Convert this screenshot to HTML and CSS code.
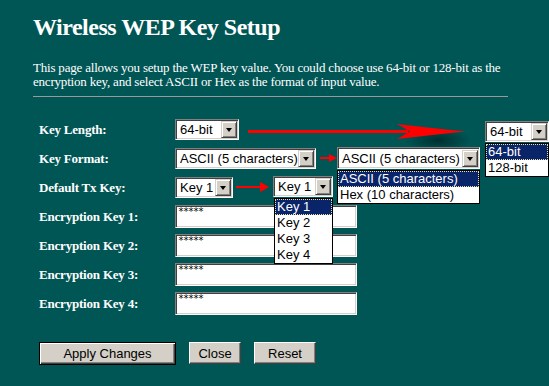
FILE: index.html
```html
<!DOCTYPE html>
<html>
<head>
    <title>Wireless WEP Key Setup</title>
    <link rel="stylesheet" href="styles.css">
</head>
<body>
<div class="page">
    <h1 class="title">Wireless WEP Key Setup</h1>
    <p class="intro">This page allows you setup the WEP key value. You could choose use 64-bit or 128-bit as the encryption key, and select ASCII or Hex as the format of input value.</p>
    <hr class="rule">

    <div class="form">
        <div class="row">
            <div class="label">Key Length:</div>
            <div class="select len"><span class="value">64-bit</span><span class="drop"></span></div>
        </div>
        <div class="row">
            <div class="label">Key Format:</div>
            <div class="select fmt"><span class="value">ASCII (5 characters)</span><span class="drop"></span></div>
        </div>
        <div class="row">
            <div class="label">Default Tx Key:</div>
            <div class="select tx"><span class="value">Key 1</span><span class="drop"></span></div>
        </div>
        <div class="row">
            <div class="label">Encryption Key 1:</div>
            <div class="textbox">*****</div>
        </div>
        <div class="row">
            <div class="label">Encryption Key 2:</div>
            <div class="textbox">*****</div>
        </div>
        <div class="row">
            <div class="label">Encryption Key 3:</div>
            <div class="textbox">*****</div>
        </div>
        <div class="row">
            <div class="label">Encryption Key 4:</div>
            <div class="textbox">*****</div>
        </div>
    </div>

    <div class="actions">
        <button class="btn btn-default apply">Apply Changes</button>
        <button class="btn close">Close</button>
        <button class="btn reset">Reset</button>
    </div>

    <!-- annotations: opened dropdowns pasted over the form -->
    <div class="shadow"></div>
    <svg class="arrow arrow-len" width="224" height="24" viewBox="0 0 224 24">
        <rect x="2" y="10" width="160" height="3" fill="#f00"/>
        <path d="M151 4 Q185 8 219 11.5 Q185 15 151 19 L164 11.5 Z" fill="#f00"/>
    </svg>
    <svg class="arrow arrow-fmt" width="18" height="10" viewBox="0 0 18 10">
        <rect x="0" y="4" width="10" height="2" fill="#f00"/>
        <path d="M9 1 L17 5 L9 9 Z" fill="#f00"/>
    </svg>
    <svg class="arrow arrow-tx" width="38" height="12" viewBox="0 0 38 12">
        <rect x="1" y="5" width="27" height="2" fill="#f00"/>
        <path d="M25 1 L34 6 L25 11 Z" fill="#f00"/>
    </svg>

    <div class="popup popup-len">
        <div class="select"><span class="value">64-bit</span><span class="drop"></span></div>
        <ul class="list">
            <li class="on">64-bit</li>
            <li>128-bit</li>
        </ul>
    </div>
    <div class="popup popup-fmt">
        <div class="select"><span class="value">ASCII (5 characters)</span><span class="drop"></span></div>
        <ul class="list">
            <li class="on">ASCII (5 characters)</li>
            <li>Hex (10 characters)</li>
        </ul>
    </div>
    <div class="popup popup-tx">
        <div class="select"><span class="value">Key 1</span><span class="drop"></span></div>
        <ul class="list">
            <li class="on">Key 1</li>
            <li>Key 2</li>
            <li>Key 3</li>
            <li>Key 4</li>
        </ul>
    </div>
</div>
</body>
</html>
```

FILE: styles.css
```css
html, body {
    margin: 0;
    padding: 0;
    background-color: #005555;
}

body {
    font-family: "Liberation Serif", "Times New Roman", serif;
    color: #fff;
}

.page {
    position: relative;
    width: 549px;
    height: 386px;
    padding-left: 33px;
    box-sizing: border-box;
    overflow: hidden;
}

.title {
    margin: 13px 0 0;
    font-size: 24px;
    line-height: 28px;
    font-weight: bold;
    letter-spacing: -0.5px;
}

.intro {
    width: 475px;
    margin: 20px 0 0;
    font-size: 13px;
    line-height: 14px;
    letter-spacing: -0.2px;
}

.rule {
    width: 475px;
    height: 0;
    margin: 7px 0 0;
    border: none;
    border-top: 1px solid #9a9a9a;
}

.form {
    margin-top: 18px;
    padding-left: 6px;
}

.row {
    display: flex;
    align-items: center;
    height: 29px;
}

.label {
    width: 136px;
    font-size: 13px;
    font-weight: bold;
    letter-spacing: -0.2px;
}

/* win98 style combo box */
.select {
    position: relative;
    display: flex;
    align-items: center;
    height: 21px;
    box-sizing: border-box;
    background: #fff;
    border: 1px solid;
    border-color: #808080 #fff #fff #808080;
    box-shadow: inset 1px 1px #404040, inset -1px -1px #d4d0c8;
    font-family: "Liberation Sans", Arial, sans-serif;
    font-size: 13px;
    color: #000;
}

.select .value {
    flex: 1;
    padding-left: 4px;
    white-space: nowrap;
    overflow: hidden;
}

.select .drop {
    position: relative;
    width: 16px;
    height: 17px;
    margin-right: 1px;
    box-sizing: border-box;
    background: #d4d0c8;
    border: 1px solid;
    border-color: #d4d0c8 #404040 #404040 #d4d0c8;
    box-shadow: inset 1px 1px #fff, inset -1px -1px #808080;
}

.select .drop::after {
    content: "";
    position: absolute;
    left: 4px;
    top: 6px;
    border-left: 3.5px solid transparent;
    border-right: 3.5px solid transparent;
    border-top: 4px solid #000;
}

.select.len { width: 64px; }
.select.fmt { width: 141px; }
.select.tx { width: 58px; }

.textbox {
    width: 182px;
    height: 23px;
    box-sizing: border-box;
    background: #fff;
    border: 1px solid;
    border-color: #808080 #fff #fff #808080;
    box-shadow: inset 1px 1px #404040, inset -1px -1px #d4d0c8;
    padding: 2px 0 0 2px;
    font-family: "DejaVu Sans Mono", monospace;
    font-size: 10px;
    line-height: 8px;
    letter-spacing: -1px;
    color: #000;
}

.actions {
    display: flex;
    gap: 13px;
    margin-top: 24px;
    padding-left: 6px;
}

.btn {
    height: 22px;
    padding: 0;
    box-sizing: border-box;
    background: #d4d0c8;
    border: 1px solid;
    border-color: #fff #404040 #404040 #fff;
    box-shadow: inset -1px -1px #808080;
    font-family: "Liberation Sans", Arial, sans-serif;
    font-size: 13px;
    color: #000;
}

.btn-default {
    height: 23px;
    border: 1px solid #000;
    box-shadow: inset 1px 1px #fff, inset -1px -1px #404040, inset -2px -2px #808080;
}

.apply { width: 137px; }
.close { width: 52px; }
.reset { width: 62px; }

/* annotations */
.arrow {
    position: absolute;
    display: block;
}

.arrow-len { left: 246px; top: 120px; }
.arrow-fmt { left: 320px; top: 153px; }
.arrow-tx { left: 235px; top: 181px; }

.shadow {
    position: absolute;
    left: 405px;
    top: 128px;
    width: 66px;
    height: 24px;
    background: radial-gradient(ellipse at center, rgba(0, 0, 0, 0.45), rgba(0, 0, 0, 0) 70%);
}

.popup {
    position: absolute;
    display: flex;
    flex-direction: column;
    gap: 1px;
}

.popup-len { left: 485px; top: 121px; width: 64px; }
.popup-fmt { left: 337px; top: 147px; width: 143px; }
.popup-tx { left: 273px; top: 176px; width: 60px; }

.popup-fmt .select { height: 22px; }

.list {
    margin: 0;
    padding: 0;
    list-style: none;
    background: #fff;
    border: 1px solid #000;
    font-family: "Liberation Sans", Arial, sans-serif;
    font-size: 13px;
    color: #000;
}

.popup-tx .list { margin-left: 1px; }

.list li {
    height: 16px;
    line-height: 16px;
    padding-left: 2px;
    white-space: nowrap;
}

.list li.on {
    background: #0a246a;
    color: #fff;
    outline: 1px dotted #e8e0a0;
    outline-offset: -1px;
}
```
